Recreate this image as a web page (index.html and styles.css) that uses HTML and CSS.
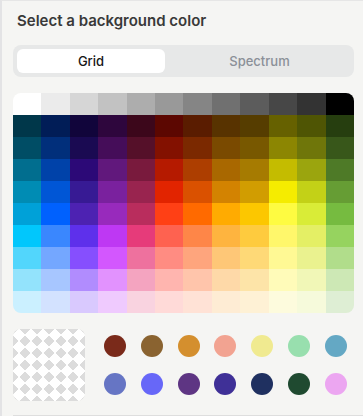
FILE: index.html
```html
<!DOCTYPE html>
<html lang="en">
<head>
  <meta charset="UTF-8" />
  <title>Background color</title>
  <meta name="viewport" content="width=device-width, initial-scale=1.0" />
  <link rel="stylesheet" href="styles.css">
</head>
<body>
  <div class="panel">
    <h2 class="title">Select a background color</h2>

    <div class="tabs">
      <div class="tab active">Grid</div>
      <div class="tab">Spectrum</div>
    </div>

    <div class="grid" id="colorGrid"></div>

    <div class="recent">
      <div class="checker"></div>
      <div class="swatches" id="swatches"></div>
    </div>
    <div class="divider"></div>
  </div>

  <script>
    const gridRows = [
      ["#ffffff","#ebebeb","#d6d6d6","#c2c2c2","#adadad","#999999","#858585","#707070","#5c5c5c","#474747","#333333","#000000"],
      ["#00374a","#011d57","#11053b","#2e063d","#3c071b","#5c0701","#5a1c00","#583300","#563d00","#666100","#4f5504","#263e0f"],
      ["#004d65","#012f7b","#1a0a52","#450d59","#551029","#831100","#7b2900","#7a4a00","#785800","#8c8602","#6f760a","#38571a"],
      ["#016e8f","#0042a9","#2c0977","#61187c","#791a3d","#b51a00","#ad3e00","#a96800","#a67b01","#c4bc00","#9ba50e","#4e7a27"],
      ["#008cb4","#0056d6","#371a94","#7a219e","#99244f","#e22400","#da5100","#d38301","#d19d01","#f5ec00","#c3d117","#669d34"],
      ["#00a1d8","#0061fe","#4d22b2","#982abc","#b92d5d","#ff4015","#ff6a00","#ffab01","#fcc700","#fefb41","#d9ec37","#76bb40"],
      ["#01c7fc","#3a87fe","#5e30eb","#be38f3","#e63b7a","#fe6250","#fe8648","#feb43f","#fecb3e","#fff76b","#e4ef65","#96d35f"],
      ["#52d6fc","#74a7ff","#864ffe","#d357fe","#ee719e","#ff8c82","#fea57d","#fec777","#fed977","#fff994","#eaf28f","#b1dd8b"],
      ["#93e3fc","#a7c6ff","#b18cfe","#e292fe","#f4a4c0","#ffb5af","#ffc5ab","#fed9a8","#fde4a8","#fffbb9","#f1f7b7","#cde8b5"],
      ["#cbf0ff","#d3e2ff","#d9c9fe","#efcafe","#f9d3e0","#ffdad8","#ffe2d6","#feecd4","#fef1d5","#fdfbdd","#f6fadb","#deeed4"]
    ];

    const recent = [
      "#7a2a1a","#8a6330","#d48f2e","#f2a391","#f0ea90","#98dfae","#64a8c4",
      "#6675c4","#6767f8","#5e3583","#3f3097","#1f3060","#1f4a30","#eca6f1"
    ];

    const grid = document.getElementById("colorGrid");
    gridRows.forEach(row => {
      row.forEach(c => {
        const cell = document.createElement("div");
        cell.className = "cell";
        cell.style.background = c;
        grid.appendChild(cell);
      });
    });

    const swatches = document.getElementById("swatches");
    recent.forEach(c => {
      const dot = document.createElement("div");
      dot.className = "swatch";
      dot.style.background = c;
      swatches.appendChild(dot);
    });
  </script>
</body>
</html>
```

FILE: styles.css
```css
* { box-sizing: border-box; }
body {
  margin: 0;
  background: #f5f5f3;
  font-family: 'Inter', 'Noto Sans', sans-serif;
  color: #383838;
}
.panel {
  border-left: 2px solid #e3e3e5;
  border-top: 1px solid #e6e6e6;
  padding: 10px 9px 0 11px;
}
.title {
  margin: 0 0 14px 4px;
  font-size: 15px;
  line-height: 20px;
  font-weight: 600;
  color: #393939;
}
.tabs {
  display: flex;
  gap: 4px;
  padding: 4px;
  background: #e7e8e8;
  border-radius: 8px;
}
.tab {
  flex: 1;
  height: 24px;
  line-height: 24px;
  text-align: center;
  font-size: 13px;
  font-weight: 500;
  color: #8b9098;
  border-radius: 6px;
}
.tab.active {
  flex: 0 0 148px;
  background: #fff;
  color: #161616;
}
.grid {
  margin-top: 16px;
  display: grid;
  grid-template-columns: repeat(12, 1fr);
  grid-auto-rows: 22px;
  border-radius: 8px;
  overflow: hidden;
}
.recent {
  display: flex;
  gap: 12px;
  margin-top: 16px;
  padding-bottom: 14px;
}
.checker {
  flex: 0 0 72px;
  height: 72px;
  border-radius: 8px;
  background-color: #fff;
  background-image:
    linear-gradient(135deg, #dcdcdc 25%, transparent 25%),
    linear-gradient(225deg, #dcdcdc 25%, transparent 25%),
    linear-gradient(45deg, #dcdcdc 25%, transparent 25%),
    linear-gradient(315deg, #dcdcdc 25%, transparent 25%);
  background-size: 12px 12px;
}
.swatches {
  flex: 1;
  display: grid;
  grid-template-columns: repeat(7, 1fr);
  row-gap: 16px;
  align-content: center;
  justify-items: center;
}
.swatch {
  width: 22px;
  height: 22px;
  border-radius: 50%;
}
.divider {
  margin-right: -9px;
  border-top: 1px solid #dedede;
}
```
